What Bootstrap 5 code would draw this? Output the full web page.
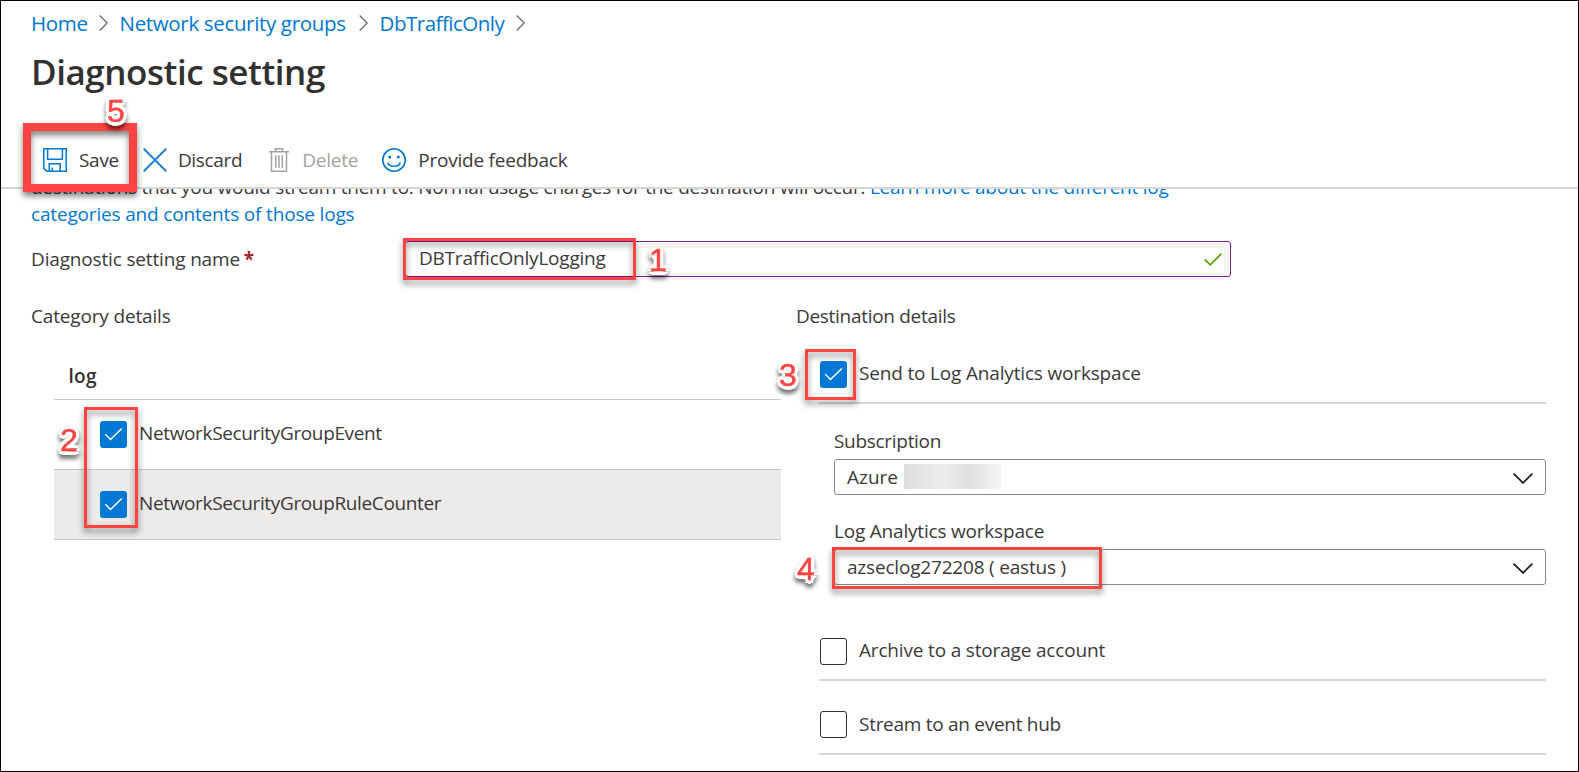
<!DOCTYPE html>
<html lang="en">
<head>
<meta charset="utf-8">
<meta name="viewport" content="width=device-width, initial-scale=1">
<title>Diagnostic setting</title>
<link rel="stylesheet" href="https://cdn.jsdelivr.net/npm/bootstrap@5.3.0/dist/css/bootstrap.min.css">
<style>
  body { font-family: "Open Sans", sans-serif; font-size: 19px; line-height: 27px; letter-spacing: -.22px; color: #3b3a39; background: #fff; white-space: nowrap; }
  a { color: #0078d4; text-decoration: none; }
  .frame { height: 100vh; border: 1px solid #000; overflow: hidden; }
  .page-head { padding: 8px 0 0 30px; }
  .crumbs { font-size: 20.5px; line-height: 28px; letter-spacing: -.34px; }
  .page-title { font-size: 35px; line-height: 48px; font-weight: 600; letter-spacing: -.46px; color: #323130; margin: 11px 0 37px 0; }
  .toolbar { height: 56px; padding-left: 42px; border-bottom: 2px solid #d6d6d6; }
  .toolbar svg { flex: none; }
  .toolbar span { padding-top: 1px; }
  .off { color: #a3a2a0; }
  .panel { padding-left: 30px; overflow: hidden; }
  .intro { margin: -15px 0 13px; letter-spacing: -.25px; }
  .intro .tail { letter-spacing: -.17px; }
  .name-label { width: 374px; padding-top: 5px; letter-spacing: -.16px; }
  .name-box { width: 826px; height: 36px; border: 1px solid #881798; border-radius: 3px; padding: 3px 8px 0 13px; }
  .cols { margin-top: 26px; }
  .col-left { width: 750px; margin-right: 15px; }
  .col-right { width: 750px; }
  .col-title { height: 26px; }
  .log-table { margin-left: 23px; }
  .log-head { height: 71px; padding: 34px 0 0 14.5px; font-weight: 600; border-bottom: 1px solid #c8c6c4; letter-spacing: .3px; color: #323130; }
  .log-row { height: 70px; padding: 20px 0 0 46px; border-bottom: 1px solid #c8c6c4; letter-spacing: -.36px; }
  .log-row.hot { background: #edebe9; }
  .tick { flex: none; width: 27px; height: 27px; margin: 1px 12px 0 0; border-radius: 3px; background: #0078d4; display: block; }
  .tick.empty { background: #fff; border: 1px solid #323130; }
  .dest { margin-left: 23px; padding-left: 1px; border-bottom: 2px solid #d6d6d6; letter-spacing: -.17px; }
  .fields { margin-left: 38px; }
  .pick { height: 36px; border: 1px solid #8a8886; border-radius: 3px; padding: 4px 12px 0 12px; }
  .masked { width: 97px; height: 25px; margin: 0 0 0 6px; background: linear-gradient(90deg, #dedede, #ececec 40%, #dfdfdf 68%, #f6f6f6); }
  .ring { position: absolute; border: 3px solid #ff4343; filter: drop-shadow(0 4px 3px rgba(0,0,0,.5)); pointer-events: none; }
  .step { position: absolute; font: 32px/32px "Liberation Sans", sans-serif; letter-spacing: 0; color: #ff4343; -webkit-text-stroke: .5px #ff4343;
    text-shadow: 3.6px 0 #fff, -3.6px 0 #fff, 0 3.6px #fff, 0 -3.6px #fff, 2.6px 2.6px #fff, -2.6px 2.6px #fff, 2.6px -2.6px #fff, -2.6px -2.6px #fff, 0 0 1px #fff;
    filter: drop-shadow(0 4px 2px rgba(0,0,0,.55)); }
</style>
</head>
<body>
<div class="frame">
  <header class="page-head">
    <nav class="crumbs d-flex align-items-center">
      <a href="#">Home</a>
      <svg width="9" height="16" viewBox="0 0 9 16" style="margin:0 12px 0 11px" fill="none" stroke="#666" stroke-width="1.2"><path d="M.7.5 8.2 8 .7 15.500"/></svg>
      <a href="#">Network security groups</a>
      <svg width="9" height="16" viewBox="0 0 9 16" style="margin:0 12px 0 13px" fill="none" stroke="#666" stroke-width="1.2"><path d="M.7.5 8.2 8 .7 15.500"/></svg>
      <a href="#" style="letter-spacing:-.5px">DbTrafficOnly</a>
      <svg width="9" height="16" viewBox="0 0 9 16" style="margin-left:12px" fill="none" stroke="#666" stroke-width="1.2"><path d="M.7.5 8.2 8 .7 15.500"/></svg>
    </nav>
    <h1 class="page-title">Diagnostic setting</h1>
  </header>

  <div class="toolbar d-flex align-items-center position-relative">
    <svg width="24" height="24" viewBox="0 0 24 24" fill="none" stroke="#0078d4" stroke-width="1.5"><path d="M.8.8h22.4v22.4H3.6L.8 20.400zM4.600.8v10.500h14.800V.8M6.300 23.200v-7.500h10.900v7.500M9.300 23v-3.600"/></svg>
    <span style="margin-left:12px;letter-spacing:-.3px">Save</span>
    <svg width="24" height="24" viewBox="0 0 24 24" style="margin-left:24px" fill="none" stroke="#0078d4" stroke-width="1.8"><path d="M.7.7 23.300 23.300M23.300.7.7 23.300"/></svg>
    <span style="margin-left:11px;letter-spacing:-.35px">Discard</span>
    <svg width="20" height="24" viewBox="0 0 20 24" style="margin-left:27px" fill="none" stroke="#a3a2a0" stroke-width="1.5"><path d="M0 3.700h20M6.500 3.500V.8h7v2.700M2.500 4v19.200h15V4M6.700 7.300v12.400M10 7.300v12.400M13.300 7.300v12.400"/></svg>
    <span class="off" style="margin-left:13px">Delete</span>
    <svg width="24" height="24" viewBox="0 0 24 24" style="margin-left:24px" fill="none" stroke="#0078d4" stroke-width="1.6"><circle cx="12" cy="12" r="11.200"/><path d="M5.700 14.500c1.600 5 11 5 12.600 0"/><circle cx="7.700" cy="9" r="1.500" fill="#0078d4" stroke="none"/><circle cx="16.300" cy="9" r="1.500" fill="#0078d4" stroke="none"/></svg>
    <span style="margin-left:12px">Provide feedback</span>
    <div class="ring" style="left:22px;top:-10px;width:114px;height:69px;border-width:8px;z-index:2"></div>
    <div class="step" style="left:106px;top:-38px;z-index:3">5</div>
  </div>

  <main class="panel">
    <p class="intro">destinations that you would stream them to. Normal usage charges for the destination will occur. <a href="#">Learn more about the different log<br><span class="tail">categories and contents of those logs</span></a></p>

    <div class="d-flex">
      <div class="name-label">Diagnostic setting name <b style="color:#a4262c;margin-left:-1px">*</b></div>
      <div class="name-box position-relative d-flex justify-content-between">
        <span>DBTrafficOnlyLogging</span>
        <svg width="18" height="13" viewBox="0 0 18 13" style="margin-top:8px" fill="none" stroke="#57a300" stroke-width="1.7"><path d="m.6 6.300 5.600 5.500L17.400.7"/></svg>
        <div class="ring" style="left:-3px;top:-4px;width:233px;height:42px"></div>
        <div class="step" style="left:243px;top:2px">1</div>
      </div>
    </div>

    <div class="cols d-flex">
      <section class="col-left">
        <div class="col-title" style="letter-spacing:-.16px">Category details</div>
        <div class="log-table">
          <div class="log-head">log</div>
          <div class="log-row d-flex position-relative">
            <svg class="tick" viewBox="0 0 27 27" fill="none" stroke="#fff" stroke-width="1.500"><path d="m5.300 13.300 5.200 5.200L21.800 7.500"/></svg>NetworkSecurityGroupEvent
            <div class="ring" style="left:30px;top:7px;width:54px;height:121px;z-index:2"></div>
            <div class="step" style="left:6px;top:24px">2</div>
          </div>
          <div class="log-row hot d-flex">
            <svg class="tick" viewBox="0 0 27 27" fill="none" stroke="#fff" stroke-width="1.500"><path d="m5.300 13.300 5.200 5.200L21.800 7.500"/></svg>NetworkSecurityGroupRuleCounter
          </div>
        </div>
      </section>

      <section class="col-right">
        <div class="col-title" style="letter-spacing:-.3px">Destination details</div>
        <div class="dest d-flex position-relative" style="height:75px;padding-top:31px">
          <svg class="tick" viewBox="0 0 27 27" fill="none" stroke="#fff" stroke-width="1.500"><path d="m5.300 13.300 5.200 5.200L21.800 7.500"/></svg>Send to Log Analytics workspace
          <div class="ring" style="left:-14px;top:20px;width:51px;height:51px"></div>
          <div class="step" style="left:-40px;top:30px">3</div>
        </div>
        <div class="fields">
          <div style="padding:24px 0 4px;letter-spacing:-.3px">Subscription</div>
          <div class="pick d-flex"><span style="letter-spacing:0">Azure</span><div class="masked"></div>
            <svg class="ms-auto" width="20" height="11" viewBox="0 0 20 11" style="margin-top:9px" fill="none" stroke="#1b1a19" stroke-width="1.700"><path d="m.6.6 9.400 9.300L19.400.6"/></svg></div>
          <div style="padding:23px 0 4px;letter-spacing:-.2px">Log Analytics workspace</div>
          <div class="pick d-flex position-relative"><span style="letter-spacing:-.19px">azseclog272208 ( eastus )</span>
            <svg class="ms-auto" width="20" height="11" viewBox="0 0 20 11" style="margin-top:9px" fill="none" stroke="#1b1a19" stroke-width="1.700"><path d="m.6.6 9.400 9.300L19.400.6"/></svg>
            <div class="ring" style="left:-3px;top:-3px;width:270px;height:42px"></div>
            <div class="step" style="left:-38px;top:3px">4</div>
          </div>
        </div>
        <div class="dest d-flex" style="height:96px;padding-top:52px"><span class="tick empty"></span>Archive to a storage account</div>
        <div class="dest d-flex" style="height:74px;padding-top:30px;letter-spacing:-.28px"><span class="tick empty" style="margin-top:0"></span>Stream to an event hub</div>
      </section>
    </div>
  </main>
</div>
<script src="https://cdn.jsdelivr.net/npm/bootstrap@5.3.0/dist/js/bootstrap.bundle.min.js"></script>
</body>
</html>
